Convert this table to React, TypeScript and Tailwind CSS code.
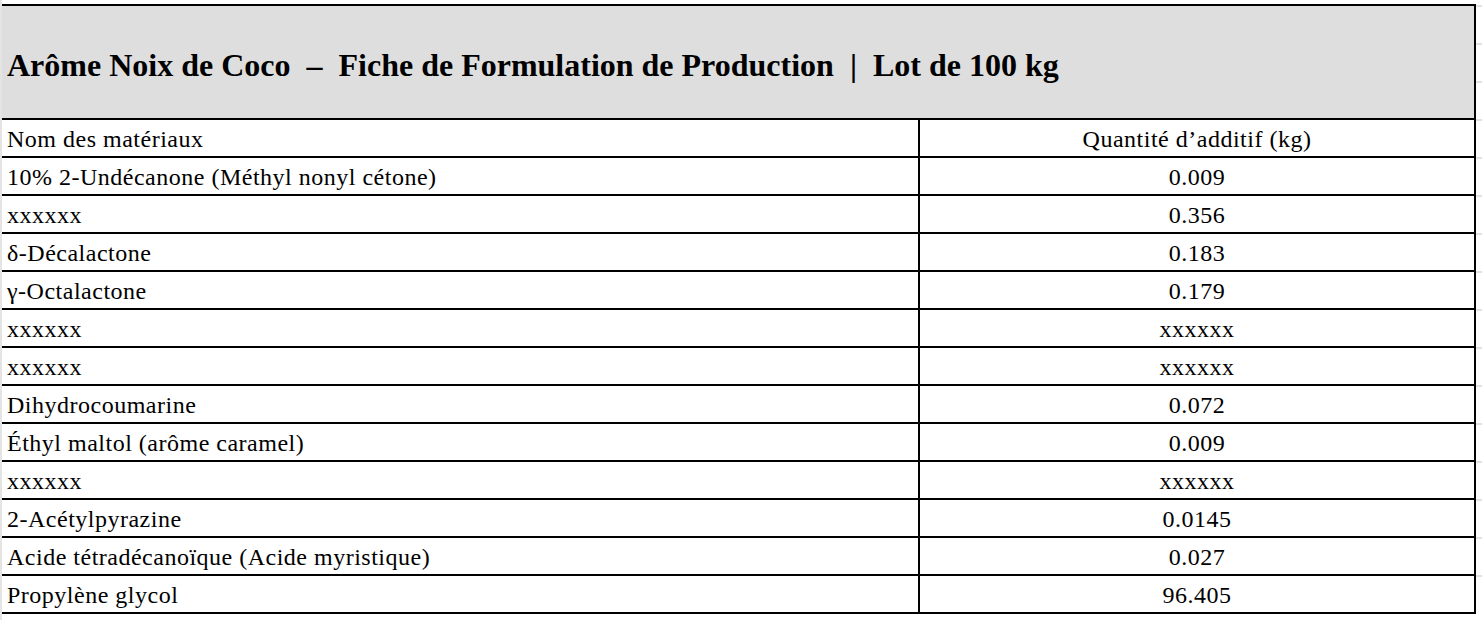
import React from "react";

const rows: [string, string][] = [
  ["10% 2-Undécanone (Méthyl nonyl cétone)", "0.009"],
  ["xxxxxx", "0.356"],
  ["δ-Décalactone", "0.183"],
  ["γ-Octalactone", "0.179"],
  ["xxxxxx", "xxxxxx"],
  ["xxxxxx", "xxxxxx"],
  ["Dihydrocoumarine", "0.072"],
  ["Éthyl maltol (arôme caramel)", "0.009"],
  ["xxxxxx", "xxxxxx"],
  ["2-Acétylpyrazine", "0.0145"],
  ["Acide tétradécanoïque (Acide myristique)", "0.027"],
  ["Propylène glycol", "96.405"],
];

export default function App() {
  const stubs = Array.from({ length: 16 });
  return (
    <div
      className="w-[1482px] h-[620px] bg-white text-black flex overflow-hidden"
      style={{ fontFamily: '"Liberation Serif", "DejaVu Serif", serif' }}
    >
      <div className="w-[2px] h-full bg-[#e4e4e4] shrink-0" />
      <div className="w-[1474px] shrink-0 pt-[4px]">
        <div className="border-t-2 border-r-2 border-black">
          <div className="h-[114px] bg-[#dedede] border-b-2 border-black flex items-center pl-[5px] pt-[6px]">
            <span className="text-[32px] leading-none font-bold whitespace-pre">
              Arôme Noix de Coco  –  Fiche de Formulation de Production  |  Lot de 100 kg
            </span>
          </div>
          <div className="grid grid-cols-[918px_1fr] h-[38px] border-b-2 border-black text-[24px] tracking-[0.5px] leading-none">
            <div className="border-r-2 border-black flex items-center pl-[5px] pt-[2px]">Nom des matériaux</div>
            <div className="flex items-center justify-center pt-[2px]">Quantité d’additif (kg)</div>
          </div>
          {rows.map(([name, qty], i) => (
            <div
              key={i}
              className="grid grid-cols-[918px_1fr] h-[38px] border-b-2 border-black text-[24px] tracking-[0.5px] leading-none"
            >
              <div className="border-r-2 border-black flex items-center pl-[5px] pt-[2px]">{name}</div>
              <div className="flex items-center justify-center pt-[2px]">{qty}</div>
            </div>
          ))}
        </div>
      </div>
      <div className="flex-1 flex flex-col pt-[5px]">
        {stubs.map((_, i) => (
          <div key={i} className="h-[38px] shrink-0 border-t-2 border-[#e2e2e2]" />
        ))}
      </div>
    </div>
  );
}
